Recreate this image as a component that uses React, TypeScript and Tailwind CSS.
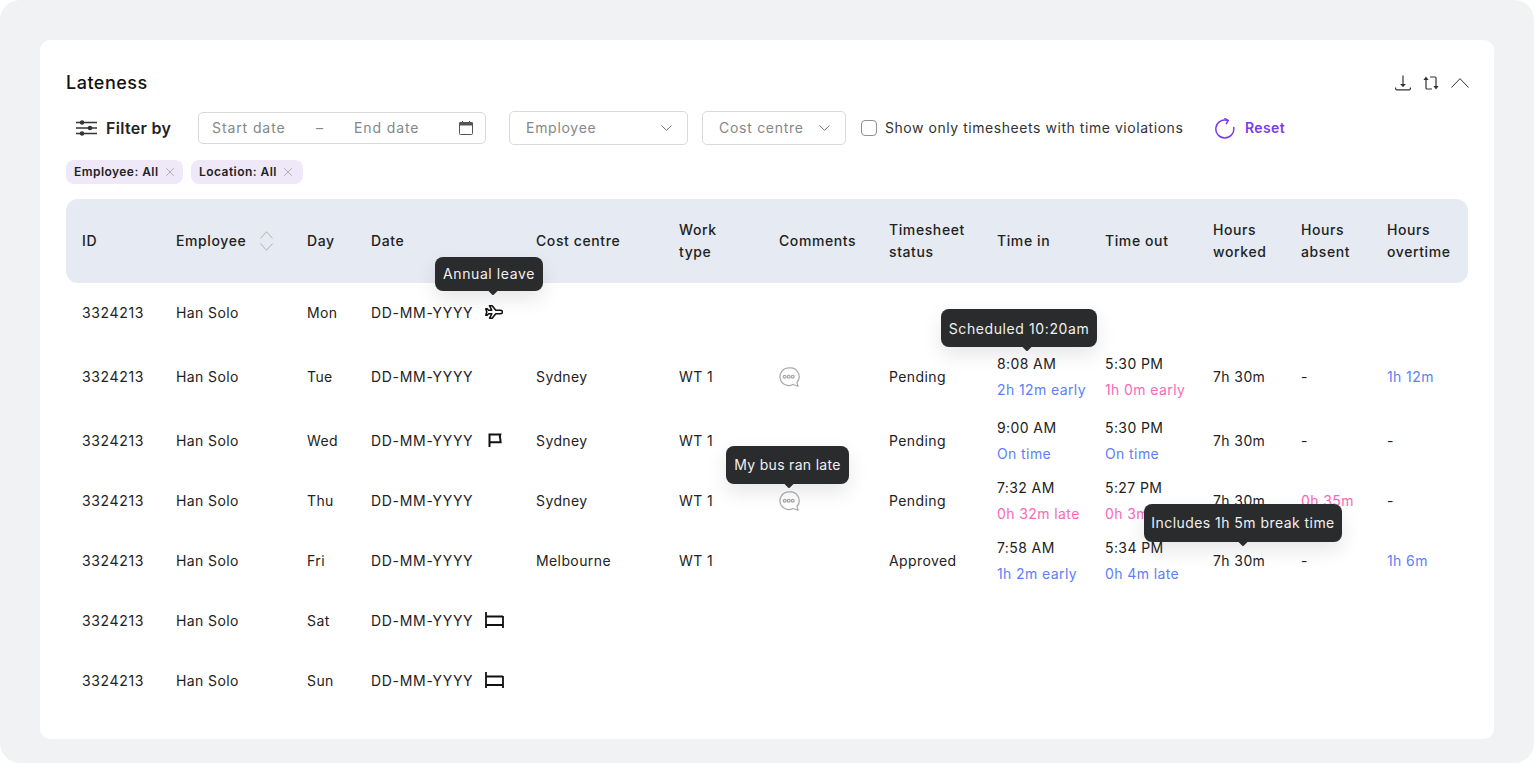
import { X } from "lucide-react";
import type { ReactNode } from "react";

const FONT = "font-['Inter','Noto_Sans',sans-serif]";
const GRID =
	"grid grid-cols-[94px_131px_64px_165px_143px_100px_110px_108px_108px_108px_88px_86px_65px] items-center px-4";
const ROW = `${GRID} pb-[2px]`;

function Tooltip({
	className,
	arrow,
	children,
}: {
	className: string;
	arrow: string;
	children: ReactNode;
}) {
	return (
		<div
			className={`absolute z-10 flex items-center justify-center whitespace-nowrap rounded-lg bg-[#2a2b2d] text-[14px] font-normal text-[#f1f1f1] shadow-[0_8px_20px_rgba(0,0,0,0.10)] ${className}`}
		>
			{children}
			<span className={`absolute -bottom-[3px] size-[7px] -translate-x-1/2 rotate-45 rounded-[1px] bg-[#2a2b2d] ${arrow}`} />
		</div>
	);
}

function PlaneIcon() {
	return (
		<svg width="18" height="16" viewBox="0 0 20 16" fill="none" stroke="#111" strokeWidth="1.7" strokeLinejoin="round">
			<path d="M5 1h3l4 5h4.5c2 0 3 1 3 2s-1 2-3 2H12l-4 5H5l2.5-5H4l-1.5 1.5H.8L2 8 .8 4.5h1.7L4 6h3.5z" />
		</svg>
	);
}

function FlagIcon() {
	return (
		<svg width="14" height="14" viewBox="0 0 14 14" fill="none" stroke="#111" strokeWidth="2">
			<path d="M1.5 14V1.5h10.8l-.5 2.2.5 2.1.3 3.4H1.5" />
		</svg>
	);
}

function BedIcon() {
	return (
		<svg width="19" height="16" viewBox="0 0 19 16" fill="none" stroke="#111" strokeWidth="1.8">
			<path d="M1 0v16M18 4v12M1 4.5h17M1 13h17" />
		</svg>
	);
}

function CommentIcon() {
	return (
		<svg width="21" height="21" viewBox="0 0 22 22" fill="none" stroke="#a9a9a9" strokeWidth="1.3" className="block">
			<path d="M10.2 1a9.2 9.2 0 1 0 4.4 17.3l5.4 1.9-1.2-4.1A9.2 9.2 0 0 0 10.2 1z" strokeLinejoin="round" />
			<circle cx="6" cy="10.2" r="1.5" />
			<circle cx="10.2" cy="10.2" r="1.5" />
			<circle cx="14.4" cy="10.2" r="1.5" />
		</svg>
	);
}

function SlidersIcon() {
	return (
		<svg width="21" height="16" viewBox="0 0 21 16" fill="#333" stroke="#333" strokeWidth="1.3">
			<path d="M0 2.5h21M0 8h21M0 13.5h21" fill="none" />
			<circle cx="6" cy="2.5" r="1.6" />
			<circle cx="14" cy="8" r="1.6" />
			<circle cx="6" cy="13.5" r="1.6" />
		</svg>
	);
}

function CalendarIcon() {
	return (
		<svg width="14" height="14" viewBox="0 0 14 14" fill="none" stroke="#555" strokeWidth="1">
			<rect x="0.5" y="1.5" width="13" height="12" rx="1" />
			<path d="M0.5 1.8h13v2.2H0.5z" fill="#555" />
			<path d="M3.5 0v2M10.5 0v2" />
		</svg>
	);
}

function DownloadIcon() {
	return (
		<svg width="16" height="16" viewBox="0 0 16 16" fill="none" stroke="#333" strokeWidth="1.2">
			<path d="M8 0.5v11" />
			<path d="M5 9h6l-3 3z" fill="#333" stroke="none" />
			<path d="M0.6 12.5v1.2c0 .7.5 1.2 1.2 1.2h12.4c.7 0 1.2-.5 1.2-1.2v-1.2" />
		</svg>
	);
}

function SwapIcon() {
	return (
		<svg width="16" height="14" viewBox="0 0 16 14" fill="none" stroke="#333" strokeWidth="1.2">
			<path d="M3 3v9c0 .6.4 1 1 1h5" />
			<path d="M13 11V2c0-.6-.4-1-1-1H7" />
			<path d="M0.4 4L3 0.6 5.6 4zM10.4 10l2.6 3.4 2.6-3.4z" fill="#333" stroke="none" />
		</svg>
	);
}

function Chevron({
	up,
	width,
	height,
	color,
}: {
	up?: boolean;
	width: number;
	height: number;
	color: string;
}) {
	const points = up
		? `0.5,${height - 0.5} ${width / 2},0.7 ${width - 0.5},${height - 0.5}`
		: `0.5,0.5 ${width / 2},${height - 0.7} ${width - 0.5},0.5`;
	return (
		<svg width={width} height={height} viewBox={`0 0 ${width} ${height}`} fill="none" stroke={color} strokeWidth="1" className="block">
			<polyline points={points} />
		</svg>
	);
}

function ResetIcon() {
	return (
		<svg width="21" height="21" viewBox="0 0 21 21" fill="none" stroke="#7c3aed" strokeWidth="1.5">
			<path d="M14 2.6A9 9 0 1 0 19.7 9.5" strokeLinecap="round" />
			<path d="M11 0.6l3.2 1.9-1.8 3.2" strokeLinecap="round" strokeLinejoin="round" />
		</svg>
	);
}

function Chip({ label, className }: { label: string; className: string }) {
	return (
		<span
			className={`flex h-6 items-center gap-[4px] rounded-lg bg-[#efe8f8] pl-2 text-[12px] font-semibold tracking-[0.45px] text-[#222] ${className}`}
		>
			{label}
			<X size={14} strokeWidth={0.9} className="text-[#777]" />
		</span>
	);
}

function Dropdown({ label, className }: { label: string; className: string }) {
	return (
		<div
			className={`flex h-[34px] items-center justify-between rounded-[5px] border border-[#d8dadd] pb-[2px] pl-4 pr-[15px] text-[14px] tracking-[0.72px] text-[#85878a] ${className}`}
		>
			{label}
			<span className="mt-[2px]">
				<Chevron width={11} height={6} color="#777" />
			</span>
		</div>
	);
}

function TimeCell({ time, note, tone }: { time: string; note: string; tone: string }) {
	return (
		<div className="mt-[2px] flex flex-col gap-[8px]">
			<span className="leading-[18px]">{time}</span>
			<span className={`leading-[18px] ${tone}`}>{note}</span>
		</div>
	);
}

function Digits({ day }: { day: string }) {
	return (
		<>
			<span className="tracking-[0.65px]">3324213</span>
			<span>Han Solo</span>
			<span>{day}</span>
		</>
	);
}

const BLUE = "text-[#5d7ff8]";
const PINK = "text-[#f968b8]";
const DATE = "tracking-[0.7px]";

export default function App() {
	return (
		<div className={`h-[763px] bg-white text-[#222] ${FONT}`}>
			<div className="h-full rounded-[20px] bg-[#f1f2f4] p-10">
				<div className="h-[699px] rounded-[10px] bg-white px-[26px] pt-8">
					<div className="flex h-[22px] items-center justify-between">
						<h1 className="pb-[2px] text-[18px] font-medium tracking-[0.5px] text-[#111]">Lateness</h1>
						<div className="mr-[-1px] flex items-center gap-[12px]">
							<DownloadIcon />
							<SwapIcon />
							<Chevron up width={18} height={10} color="#333" />
						</div>
					</div>

					<div className="mt-[17px] flex h-[34px] items-center text-[14px]">
						<span className="ml-[10px] flex w-[122px] items-center gap-[9px] text-[16px] font-semibold tracking-[0.3px] text-[#222]">
							<SlidersIcon />
							Filter by
						</span>
						<div className="flex h-[32px] w-[288px] items-center rounded-[5px] border border-[#d8dadd] pl-[13px] pr-[12px] tracking-[0.9px] text-[#85878a]">
							<span className="w-[104px] pb-[2px]">Start date</span>
							<span className="w-[38px] pb-[2px]">–</span>
							<span className="flex-1 pb-[2px]">End date</span>
							<CalendarIcon />
						</div>
						<Dropdown label="Employee" className="ml-[23px] w-[179px]" />
						<Dropdown label="Cost centre" className="ml-[14px] w-[144px]" />
						<span className="ml-[15px] size-4 rounded-[4px] border border-[#8f9194]" />
						<span className="ml-2 w-[330px] pb-[2px] tracking-[0.55px] text-[#333]">
							Show only timesheets with time violations
						</span>
						<span className="-ml-[1px] flex items-center gap-[10px] font-semibold tracking-[0.4px] text-[#7c3aed]">
							<ResetIcon />
							<span className="pb-[2px]">Reset</span>
						</span>
					</div>

					<div className="mt-[15px] flex gap-2">
						<Chip label="Employee: All" className="w-[117px]" />
						<Chip label="Location: All" className="w-[112px]" />
					</div>

					<div className="mt-[15px] text-[14px] tracking-[0.4px]">
						<div className={`${GRID} h-[84px] rounded-xl bg-[#e6eaf2] font-medium leading-[22px] tracking-[0.6px] text-[#222]`}>
							<span>ID</span>
							<span className="flex items-center gap-[14px]">
								Employee
								<span className="flex flex-col gap-[4px]">
									<Chevron up width={13} height={8} color="#b0b2b6" />
									<Chevron width={13} height={8} color="#b0b2b6" />
								</span>
							</span>
							<span>Day</span>
							<span>Date</span>
							<span>Cost centre</span>
							<span>
								Work
								<br />
								type
							</span>
							<span>Comments</span>
							<span>
								Timesheet
								<br />
								status
							</span>
							<span>Time in</span>
							<span>Time out</span>
							<span>
								Hours
								<br />
								worked
							</span>
							<span>
								Hours
								<br />
								absent
							</span>
							<span>
								Hours
								<br />
								overtime
							</span>
						</div>

						<div className={`${ROW} h-[60px]`}>
							<Digits day="Mon" />
							<span className="relative flex items-center gap-[12px]">
								<span className={DATE}>DD-MM-YYYY</span>
								<PlaneIcon />
								<Tooltip className="-top-[45px] left-[64px] h-[34px] w-[108px] tracking-[0.6px]" arrow="left-[58px]">
									Annual leave
								</Tooltip>
							</span>
						</div>

						<div className={`${ROW} h-[68px]`}>
							<Digits day="Tue" />
							<span className={DATE}>DD-MM-YYYY</span>
							<span>Sydney</span>
							<span>WT 1</span>
							<span className="block pt-[2px]">
								<CommentIcon />
							</span>
							<span>Pending</span>
							<span className="relative">
								<TimeCell time="8:08 AM" note="2h 12m early" tone={BLUE} />
								<Tooltip className="-top-[44px] -left-[56px] h-[38px] w-[156px] tracking-[0.6px]" arrow="left-[86px]">
									Scheduled 10:20am
								</Tooltip>
							</span>
							<TimeCell time="5:30 PM" note="1h 0m early" tone={PINK} />
							<span>7h 30m</span>
							<span>-</span>
							<span className={BLUE}>1h 12m</span>
						</div>

						<div className={`${ROW} h-[60px]`}>
							<Digits day="Wed" />
							<span className="flex items-center gap-[15px]">
								<span className={DATE}>DD-MM-YYYY</span>
								<FlagIcon />
							</span>
							<span>Sydney</span>
							<span>WT 1</span>
							<span />
							<span>Pending</span>
							<TimeCell time="9:00 AM" note="On time" tone={BLUE} />
							<TimeCell time="5:30 PM" note="On time" tone={BLUE} />
							<span>7h 30m</span>
							<span>-</span>
							<span>-</span>
						</div>

						<div className={`${ROW} h-[60px]`}>
							<Digits day="Thu" />
							<span className={DATE}>DD-MM-YYYY</span>
							<span>Sydney</span>
							<span>WT 1</span>
							<span className="relative block pt-[2px]">
								<CommentIcon />
								<Tooltip className="-top-[43px] -left-[53px] h-[38px] w-[123px] tracking-[0.3px]" arrow="left-[63px]">
									My bus ran late
								</Tooltip>
							</span>
							<span>Pending</span>
							<TimeCell time="7:32 AM" note="0h 32m late" tone={PINK} />
							<TimeCell time="5:27 PM" note="0h 3m early" tone={PINK} />
							<span className="relative">
								7h 30m
								<Tooltip className="top-[14px] -left-[69px] h-[38px] w-[198px] tracking-[0.45px]" arrow="left-[99px]">
									Includes 1h 5m break time
								</Tooltip>
							</span>
							<span className={PINK}>0h 35m</span>
							<span>-</span>
						</div>

						<div className={`${ROW} h-[60px]`}>
							<Digits day="Fri" />
							<span className={DATE}>DD-MM-YYYY</span>
							<span>Melbourne</span>
							<span>WT 1</span>
							<span />
							<span>Approved</span>
							<TimeCell time="7:58 AM" note="1h 2m early" tone={BLUE} />
							<TimeCell time="5:34 PM" note="0h 4m late" tone={BLUE} />
							<span>7h 30m</span>
							<span>-</span>
							<span className={BLUE}>1h 6m</span>
						</div>

						{["Sat", "Sun"].map((day) => (
							<div key={day} className={`${ROW} h-[60px]`}>
								<Digits day={day} />
								<span className="flex items-center gap-[12px]">
									<span className={DATE}>DD-MM-YYYY</span>
									<BedIcon />
								</span>
							</div>
						))}
					</div>
				</div>
			</div>
		</div>
	);
}
